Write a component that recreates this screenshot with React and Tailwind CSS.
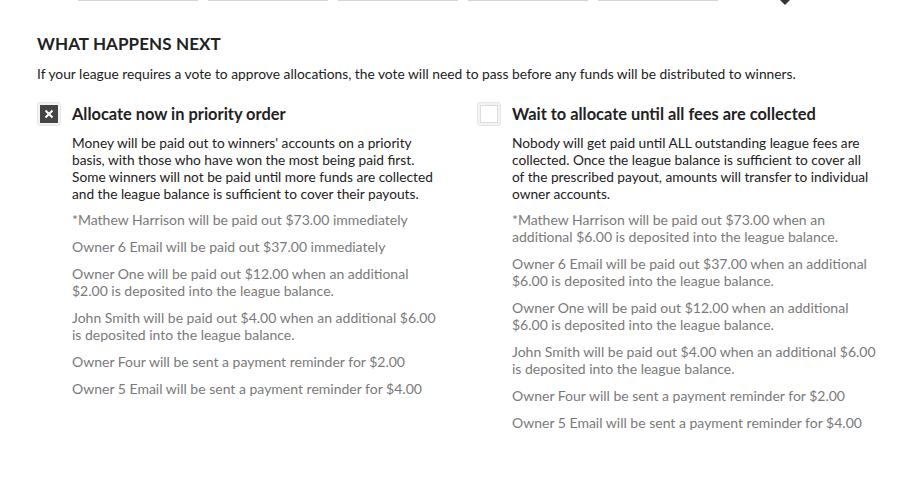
import React, { useState } from 'react';

const options = [
  {
    id: 'now',
    title: 'Allocate now in priority order',
    descWidth: 'w-[370px]',
    description:
      "Money will be paid out to winners' accounts on a priority basis, with those who have won the most being paid first. Some winners will not be paid until more funds are collected and the league balance is sufficient to cover their payouts.",
    items: [
      '*Mathew Harrison will be paid out $73.00 immediately',
      'Owner 6 Email will be paid out $37.00 immediately',
      'Owner One will be paid out $12.00 when an additional $2.00 is deposited into the league balance.',
      'John Smith will be paid out $4.00 when an additional $6.00 is deposited into the league balance.',
      'Owner Four will be sent a payment reminder for $2.00',
      'Owner 5 Email will be sent a payment reminder for $4.00',
    ],
  },
  {
    id: 'wait',
    title: 'Wait to allocate until all fees are collected',
    descWidth: 'w-[362px]',
    description:
      'Nobody will get paid until ALL outstanding league fees are collected. Once the league balance is sufficient to cover all of the prescribed payout, amounts will transfer to individual owner accounts.',
    items: [
      '*Mathew Harrison will be paid out $73.00 when an additional $6.00 is deposited into the league balance.',
      'Owner 6 Email will be paid out $37.00 when an additional $6.00 is deposited into the league balance.',
      'Owner One will be paid out $12.00 when an additional $6.00 is deposited into the league balance.',
      'John Smith will be paid out $4.00 when an additional $6.00 is deposited into the league balance.',
      'Owner Four will be sent a payment reminder for $2.00',
      'Owner 5 Email will be sent a payment reminder for $4.00',
    ],
  },
];

const Checkbox = ({ checked, onClick }) => (
  <button
    type="button"
    onClick={onClick}
    className="w-6 h-6 rounded-[3px] bg-[#f3f3f3] border border-[#e6e6e6] flex items-center justify-center shrink-0 cursor-pointer"
  >
    {checked ? (
      <span className="w-[18px] h-[18px] bg-[#444] flex items-center justify-center">
        <svg width="10" height="10" viewBox="0 0 10 10">
          <path d="M1.5 1.5 L8.5 8.5 M8.5 1.5 L1.5 8.5" stroke="#fff" strokeWidth="2" />
        </svg>
      </span>
    ) : (
      <span className="w-[18px] h-[18px] bg-white border border-[#dcdcdc]" />
    )}
  </button>
);

const App = () => {
  const [selected, setSelected] = useState('now');

  return (
    <div className="min-h-screen bg-white font-['Lato',sans-serif] text-[#222]">
      {/* tab underline strip */}
      <div className="flex items-start h-[6px] pl-[78px]">
        {[0, 1, 2, 3, 4].map(i => (
          <div key={i} className="w-[120px] h-px bg-[#d4d4d4] mr-[10px]" />
        ))}
        <div className="ml-[52px] w-0 h-0 border-l-[5px] border-r-[5px] border-t-[5px] border-l-transparent border-r-transparent border-t-[#333]" />
      </div>

      <div className="pl-[37px] pt-[27px]">
        <h2 className="text-[17px] leading-[22px] font-bold tracking-[0.1px] text-[#222]">WHAT HAPPENS NEXT</h2>
        <p className="text-[13.8px] leading-[17px] mt-[10px] text-[#222]">
          If your league requires a vote to approve allocations, the vote will need to pass before any funds will be distributed to winners.
        </p>

        <div className="flex mt-[20px]">
          {options.map(opt => (
            <div key={opt.id} className="w-[440px] shrink-0">
              <div className="flex items-center">
                <Checkbox checked={selected === opt.id} onClick={() => setSelected(opt.id)} />
                <span className="ml-[11px] text-[16.4px] font-bold text-[#222]">{opt.title}</span>
              </div>
              <div className="pl-[35px] mt-[7px]">
                <p className={`${opt.descWidth} text-[13.7px] leading-[17px] text-[#222]`}>{opt.description}</p>
                <div className="w-[370px] mt-[9px] space-y-[10px]">
                  {opt.items.map((item, i) => (
                    <p key={i} className="text-[14px] leading-[17px] text-[#7a7a7a]">{item}</p>
                  ))}
                </div>
              </div>
            </div>
          ))}
        </div>
      </div>
    </div>
  );
};

export default App;
